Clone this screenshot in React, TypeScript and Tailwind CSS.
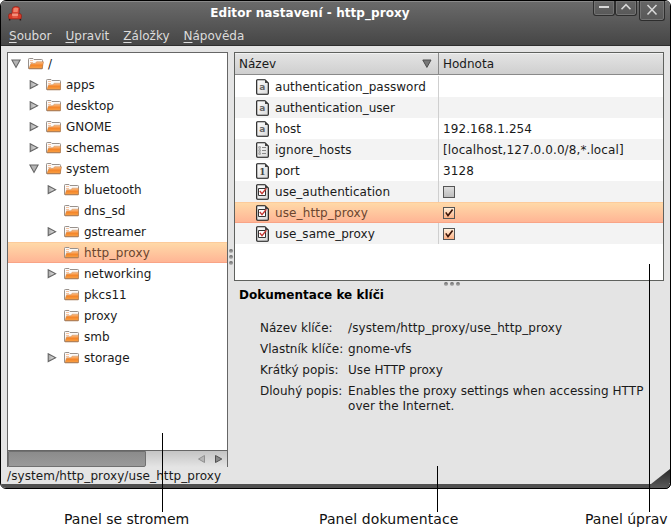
import React from "react";

type TreeItem = { label: string; level: 0 | 1 | 2; state?: "open" | "closed"; selected?: boolean };
type IconKind = "text" | "list" | "number" | "check";
type KeyRow = { name: string; kind: IconKind; value?: string; checked?: boolean; selected?: boolean };

const tree: TreeItem[] = [
  { label: "/", level: 0, state: "open" },
  { label: "apps", level: 1, state: "closed" },
  { label: "desktop", level: 1, state: "closed" },
  { label: "GNOME", level: 1, state: "closed" },
  { label: "schemas", level: 1, state: "closed" },
  { label: "system", level: 1, state: "open" },
  { label: "bluetooth", level: 2, state: "closed" },
  { label: "dns_sd", level: 2 },
  { label: "gstreamer", level: 2, state: "closed" },
  { label: "http_proxy", level: 2, selected: true },
  { label: "networking", level: 2, state: "closed" },
  { label: "pkcs11", level: 2 },
  { label: "proxy", level: 2 },
  { label: "smb", level: 2 },
  { label: "storage", level: 2, state: "closed" },
];

const keys: KeyRow[] = [
  { name: "authentication_password", kind: "text", value: "" },
  { name: "authentication_user", kind: "text", value: "" },
  { name: "host", kind: "text", value: "192.168.1.254" },
  { name: "ignore_hosts", kind: "list", value: "[localhost,127.0.0.0/8,*.local]" },
  { name: "port", kind: "number", value: "3128" },
  { name: "use_authentication", kind: "check", checked: false },
  { name: "use_http_proxy", kind: "check", checked: true, selected: true },
  { name: "use_same_proxy", kind: "check", checked: true },
];

const docs = [
  ["Název klíče:", "/system/http_proxy/use_http_proxy"],
  ["Vlastník klíče:", "gnome-vfs"],
  ["Krátký popis:", "Use HTTP proxy"],
  ["Dlouhý popis:", "Enables the proxy settings when accessing HTTP over the Internet."],
];

const menus = ["Soubor", "Upravit", "Záložky", "Nápověda"];

const indent = { 0: "pl-[3px]", 1: "pl-[21px]", 2: "pl-[39px]" };
const highlight = "bg-linear-to-b from-[#ffd9a8] to-[#ffb595] border-t border-t-[#fdcb9b] border-b border-b-[#f9a486]";

function Defs() {
  return (
    <svg width="0" height="0" className="absolute">
      <defs>
        <linearGradient id="folder" x1="0" y1="0" x2="0" y2="1">
          <stop offset="0" stopColor="#fcc08a" />
          <stop offset="0.5" stopColor="#f5862a" />
          <stop offset="1" stopColor="#f9a347" />
        </linearGradient>
        <linearGradient id="arrow" x1="0" y1="0" x2="1" y2="0">
          <stop offset="0" stopColor="#a8a8a8" />
          <stop offset="1" stopColor="#ececec" />
        </linearGradient>
        <linearGradient id="paper" x1="0" y1="0" x2="1" y2="1">
          <stop offset="0" stopColor="#ffffff" />
          <stop offset="1" stopColor="#d8d8d8" />
        </linearGradient>
        <linearGradient id="corner" x1="0" y1="0" x2="0" y2="1">
          <stop offset="0" stopColor="#2a2a2a" />
          <stop offset="1" stopColor="#5a5a5a" />
        </linearGradient>
      </defs>
    </svg>
  );
}

function Expander({ state }: { state?: "open" | "closed" }) {
  return (
    <svg width="10" height="10" viewBox="0 0 10 10" className="mr-[7px] shrink-0">
      {state === "closed" && <path d="M1.2 0.8 L8.6 4.7 L1.2 8.6 Z" fill="url(#arrow)" stroke="#666" strokeWidth="1.1" />}
      {state === "open" && <path d="M0.9 1 H9.1 L5 8.4 Z" fill="#b4b4b4" stroke="#666" strokeWidth="1.1" />}
    </svg>
  );
}

function Folder({ open }: { open?: boolean }) {
  return (
    <svg width="16" height="12" viewBox="0 0 16 12" className="shrink-0">
      <path d="M0.5 10.5 V1.3 Q0.5 0.5 1.3 0.5 H5 L6 1.5 H13.7 Q14.5 1.5 14.5 2.3 V10.5 Z" fill="#fbfaf9" stroke="#98918c" />
      <path d="M2 2.5 H5 M2 4.5 H5" stroke="#f6c3a0" />
      {open ? (
        <path d="M0.9 10.6 L3 5.4 H7.2 L8.6 3.8 H15.6 L14.1 10.6 Z" fill="url(#folder)" stroke="#c07a40" strokeWidth="0.5" />
      ) : (
        <path d="M1 10.6 L2.6 5.8 H6.8 L8.2 4.2 H14.4 V10.6 Z" fill="url(#folder)" stroke="#c9854c" strokeWidth="0.5" />
      )}
      <path d="M1 10.8 H14.2" stroke="#9d7355" strokeWidth="0.7" />
    </svg>
  );
}

function KeyIcon({ kind }: { kind: IconKind }) {
  return (
    <svg width="13" height="16" viewBox="0 0 13 16" className="mr-[6px] shrink-0">
      <path d="M1.5 0.7 H9 L12.3 4 V14.2 Q12.3 15.3 11.3 15.3 H1.7 Q0.7 15.3 0.7 14.3 V1.6 Q0.7 0.7 1.5 0.7 Z" fill="url(#paper)" stroke="#111" strokeWidth="1.1" />
      <path d="M9 1 V4 H12 Z" fill="#444" />
      {kind === "text" && (
        <text x="6.2" y="11.2" textAnchor="middle" fontSize="9" fontWeight="bold" fill="#666" fontFamily="'DejaVu Sans', sans-serif">a</text>
      )}
      {kind === "number" && (
        <text x="6.3" y="11.6" textAnchor="middle" fontSize="9" fontWeight="bold" fill="#444" fontFamily="'DejaVu Serif', serif">1</text>
      )}
      {kind === "list" && (
        <g stroke="#8a8a8a" fill="none">
          <path d="M6 5.5 H10 M6 8.5 H10 M6 11.5 H10" />
          <path d="M2.8 4.7 h1.6 v1.6 h-1.6z M2.8 7.7 h1.6 v1.6 h-1.6z M2.8 10.7 h1.6 v1.6 h-1.6z" strokeWidth="0.8" />
        </g>
      )}
      {kind === "check" && (
        <g fill="none">
          <path d="M2.5 4.5 H9.5 V11.5 H2.5 Z" stroke="#333" fill="#fff" />
          <path d="M3.8 7 L6 9.6 L10.4 4.2" stroke="#c33a35" strokeWidth="1.4" />
        </g>
      )}
    </svg>
  );
}

function CheckBox({ checked }: { checked?: boolean }) {
  return (
    <span
      className={
        "flex h-3 w-3 border border-[#555] " +
        (checked ? "bg-linear-to-b from-[#fff0dc] to-[#ffb083]" : "bg-linear-to-b from-[#dedede] to-[#bdbdbd]")
      }
    >
      {checked && (
        <svg width="10" height="10" viewBox="0 0 10 10">
          <path d="M1.8 4.4 L4 7.6 L8.6 1.6" fill="none" stroke="#3d1508" strokeWidth="1.6" />
        </svg>
      )}
    </span>
  );
}

function Armchair() {
  return (
    <svg width="14" height="15" viewBox="0 0 14 15" className="ml-[7px] mt-[5px] shrink-0">
      <path d="M4 8 L4.2 3 Q4.6 0.7 7.4 0.5 Q11.4 0.4 11.6 2.4 L11 8 Z" fill="#dd4433" stroke="#8d2118" strokeWidth="0.7" />
      <path d="M5.6 2.4 Q7.4 1.4 10.2 2.2 L9.6 6 H5.3 Z" fill="#f0836c" />
      <path d="M0.4 9.6 Q0.6 7.4 3 7.4 Q4.4 7.6 4.4 9 H9.6 Q9.8 7.4 11.2 7.4 Q13.6 7.6 13.6 9.8 L13 13 H1 Z" fill="#d63b29" stroke="#8d2118" strokeWidth="0.7" />
      <path d="M3.9 7.4 H10.4 L9.8 10 H4.2 Z" fill="#f3917c" />
      <path d="M4.4 11 H9.6" stroke="#f0735c" />
      <path d="M1.6 13 V14.6 M12.4 13 V14.6" stroke="#2a1c1a" strokeWidth="1.5" />
    </svg>
  );
}

function TitleBar() {
  const button = "flex justify-center rounded-b-[3px] border border-t-0 border-[#2d2d2d] bg-linear-to-b from-[#656565] to-[#585858] shadow-[inset_0_0_0_1px_#747474]";
  return (
    <div className="flex h-[26px] items-start">
      <Armchair />
      <div className="flex-1 pl-[5px] pt-[4px] text-center text-[12px] leading-[16px] font-bold text-white">
        <span className="tracking-[0.07px]">Editor nastavení - http_proxy</span>
      </div>
      <div className="flex items-start">
        <div className={button + " h-[15px] w-[22px]"}>
          <svg width="12" height="12"><path d="M1 6 H11" stroke="#d8d8d8" strokeWidth="2" /></svg>
        </div>
        <div className={button + " h-[15px] w-[22px]"}>
          <svg width="12" height="12"><path d="M1.5 8.2 L6 3.7 L10.5 8.2" fill="none" stroke="#d8d8d8" strokeWidth="1.6" /></svg>
        </div>
        <div className={button + " ml-[2px] mr-[5px] h-[20px] w-[26px]"}>
          <svg width="12" height="16"><path d="M1.5 4 L10.5 13.5 M10.5 4 L1.5 13.5" stroke="#d8d8d8" strokeWidth="1.5" /></svg>
        </div>
      </div>
    </div>
  );
}

function Grip({ vertical }: { vertical?: boolean }) {
  return (
    <div className={"flex items-center justify-center gap-[2px] " + (vertical ? "flex-col pb-[5px]" : "")}>
      {[0, 1, 2].map((i) => (
        <span key={i} className="h-1 w-1 rounded-full bg-linear-to-b from-[#666] to-[#b5b5b5]" />
      ))}
    </div>
  );
}

function TreePanel() {
  return (
    <div className="flex h-[415px] w-[221px] flex-col border-x border-t border-[#666]">
      <div className="flex-1 bg-white">
        {tree.map((t) => (
          <div
            key={t.label}
            className={"flex h-[21px] items-center whitespace-nowrap " + indent[t.level] + (t.selected ? " tracking-[0.2px] text-[#6b4530] " + highlight : "")}
          >
            <Expander state={t.state} />
            <Folder open={t.state === "open"} />
            <span className="ml-1 pt-[2px]">{t.label}</span>
          </div>
        ))}
      </div>
      <div className="flex h-[17px] items-center border-t border-[#666] bg-linear-to-b from-[#c4c4c4] to-[#e4e4e4]">
        <div className="h-[16px] w-[138px] rounded-br-[2px] border border-[#707070] bg-linear-to-b from-[#8b8b8b] to-[#999]" />
        <svg width="26" height="10" viewBox="0 0 26 10" className="ml-[51px]">
          <path d="M7.5 1.5 L1.5 5 L7.5 8.5 Z" fill="#b5b5b5" stroke="#909090" />
          <path d="M18.5 1.5 L24.8 5 L18.5 8.5 Z" fill="#888" stroke="#505050" />
        </svg>
      </div>
    </div>
  );
}

function KeysPanel() {
  return (
    <div className="h-[229px] border border-[#5f615e] bg-white">
      <div className="mb-px flex h-[22px] border-b border-[#8a8a8a] bg-linear-to-b from-[#e4e4e4] to-[#cfcfcf] shadow-[inset_0_1px_0_#f2f2f2]">
        <div className="flex w-[204px] items-center justify-between border-r border-[#8a8a8a] pl-1 pr-[6px]">
          <span className="pt-[2px]">Název</span>
          <svg width="10" height="9" viewBox="0 0 10 9"><path d="M0.8 1 H9 L4.9 8.4 Z" fill="#777" stroke="#4c4c4c" /></svg>
        </div>
        <div className="flex items-center pl-1">
          <span className="pt-[2px]">Hodnota</span>
        </div>
      </div>
      {keys.map((k, i) => (
        <div
          key={k.name}
          className={"flex h-[21px] whitespace-nowrap " + (k.selected ? highlight : i % 2 ? "bg-[#f3f3f3]" : "bg-white")}
        >
          <div className={"flex w-[204px] items-center border-r pl-[21px] " + (k.selected ? "border-transparent tracking-[0.12px] text-[#6b4530]" : "border-[#cfcfcf] tracking-[0.03px]")}>
            <KeyIcon kind={k.kind} />
            <span className="pt-px">{k.name}</span>
          </div>
          <div className="flex items-center pl-1">
            {k.kind === "check" ? <CheckBox checked={k.checked} /> : <span className="pt-px tracking-[0.1px]">{k.value}</span>}
          </div>
        </div>
      ))}
    </div>
  );
}

export default function App() {
  return (
    <div className="relative h-[527px] w-[671px] overflow-hidden bg-white font-['DejaVu_Sans',sans-serif] text-[12px] leading-[15px] text-[#1a1a1a]">
      <Defs />
      <div className="flex h-[489px] w-[671px] flex-col overflow-hidden rounded-[6px] border border-black bg-[#e4e4e4]">
        <header className="h-[45px] shrink-0 border-b border-[#2e2e2e] bg-linear-to-b from-[#6b6b6b] to-[#464646] shadow-[inset_0_1px_0_#8a8a8a]">
          <TitleBar />
          <nav className="flex gap-[14px] pl-2 pt-[2px] text-[#dcdcdc]">
            {menus.map((m) => (
              <span key={m}>
                <span className="underline underline-offset-2">{m[0]}</span>
                {m.slice(1)}
              </span>
            ))}
          </nav>
        </header>
        <main className="flex px-[6px] pt-[6px]">
          <TreePanel />
          <div className="flex w-[6px] justify-center"><Grip vertical /></div>
          <section className="flex w-[430px] flex-col">
            <KeysPanel />
            <div className="h-[6px] pl-[6px] pt-px"><Grip /></div>
            <h2 className="pl-[5px] pt-px font-bold tracking-[0.02px] text-black">Dokumentace ke klíči</h2>
            <dl className="grid grid-cols-[88px_302px] gap-y-[6px] pl-[26px] pt-[18px]">
              {docs.map(([k, v]) => (
                <React.Fragment key={k}>
                  <dt className="whitespace-nowrap">{k}</dt>
                  <dd className={v.startsWith("/") ? "tracking-[0.1px]" : "tracking-[0.05px]"}>{v}</dd>
                </React.Fragment>
              ))}
            </dl>
          </section>
        </main>
        <footer className="flex-1 pl-[6px] pt-[2px] tracking-[0.1px]">/system/http_proxy/use_http_proxy</footer>
        <div className="h-[4px] shrink-0 bg-[#505050]" />
      </div>
      <svg width="20" height="20" viewBox="0 0 20 20" className="absolute left-[651px] top-[469px]">
        <path d="M19 0 L0 15 V19 H14 L19 14 Z" fill="url(#corner)" />
        <path d="M0 19.5 H14 Q19.5 19.5 19.5 14 V0" fill="none" stroke="#000" />
      </svg>
      <div className="flex pt-[23px] text-[14px] text-[#111]">
        <span className="w-[255px] pl-[64px]">Panel se stromem</span>
        <span className="w-[267px] pl-[64px] tracking-[0.1px]">Panel dokumentace</span>
        <span className="whitespace-nowrap pl-[63px]">Panel úprav</span>
      </div>
      <div className="absolute left-[162px] top-[433px] h-[79px] w-px bg-black" />
      <div className="absolute left-[437px] top-[466px] h-[46px] w-px bg-black" />
      <div className="absolute left-[649px] top-[264px] h-[248px] w-px bg-black" />
    </div>
  );
}
